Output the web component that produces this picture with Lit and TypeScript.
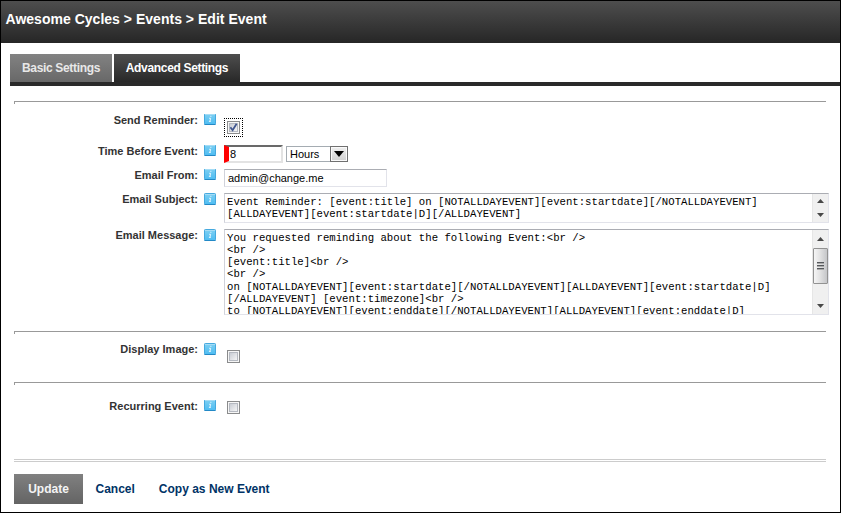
import { LitElement, html, css, svg } from "lit";
import { customElement, property } from "lit/decorators.js";
import { classMap } from "lit/directives/class-map.js";

@customElement("info-icon")
class InfoIcon extends LitElement {
  @property({ type: Boolean }) clipped = false;

  static styles = css`
    :host { display: block; height: 12px; overflow: hidden; }
    svg { display: block; }
    .up { margin-top: -1px; }
  `;

  render() {
    return html`<svg class=${classMap({ up: this.clipped })} width="12" height="12" viewBox="0 0 12 12">
      <defs><linearGradient id="g" x1="0" y1="0" x2="0" y2="1">
        <stop offset="0" stop-color="#7fd0f2" /><stop offset="1" stop-color="#4dbcf2" />
      </linearGradient></defs>
      <rect x=".5" y=".5" width="11" height="11" rx=".8" fill="url(#g)" stroke="#45a9de" />
      <path d="M1 1.5H11" stroke="#a5dcf5" />
      <path d="M.5 11.5H11.5" stroke="#2389c6" />
      <path d="M6.3 3.3H7.4M5.2 5.3H6.6L5.9 8.4H6.8M4.9 8.4H5.9" fill="none" stroke="#f2fbff" stroke-width=".95" />
    </svg>`;
  }
}

@customElement("check-box")
class CheckBox extends LitElement {
  @property({ type: Boolean }) checked = false;

  static styles = css`
    :host { display: block; width: 13px; height: 13px; }
    svg { display: block; }
  `;

  render() {
    return html`<svg width="13" height="13" viewBox="0 0 13 13">
      <defs><linearGradient id="c" x1="0" y1="0" x2="1" y2="1">
        <stop offset="0" stop-color="#c6cad2" /><stop offset="1" stop-color="#f8f8f8" />
      </linearGradient></defs>
      <rect x=".5" y=".5" width="12" height="12" fill="#f6f6f6" stroke="#8a8b8c" />
      <rect x="2.5" y="2.5" width="8" height="8" fill="url(#c)" stroke="#b5b9c1" />
      ${this.checked ? svg`<path d="M3.4 6.2L5.6 9.2L9.6 2.8" fill="none" stroke="#40568f" stroke-width="1.8" />` : ""}
    </svg>`;
  }
}

@customElement("scroll-strip")
class ScrollStrip extends LitElement {
  @property({ type: Boolean }) thumb = false;

  static styles = css`
    :host {
      display: flex; flex-direction: column; align-items: center; box-sizing: border-box;
      flex: none; width: 16px; background: #f0f0f0; border-left: 1px solid #e6e6e6; padding: 5px 0;
    }
    :host([thumb]) { padding: 7px 0 6px; }
    svg { display: block; flex: none; }
    .gap { flex: 1; }
    .thumb {
      box-sizing: border-box; width: 15px; height: 36px; margin-top: 7px; border: 1px solid #929292;
      border-radius: 1px; background: linear-gradient(90deg, #f5f5f5, #e2e2e3 45%, #c5c6c9);
      display: flex; flex-direction: column; align-items: center; justify-content: center; gap: 1px;
    }
    .grip { width: 7px; height: 2px; background: linear-gradient(#55585c 50%, #aaa 50%); }
  `;

  render() {
    return html`
      <svg width="7" height="4"><path d="M0 4L3.5 0L7 4Z" fill="#484848" /></svg>
      ${this.thumb ? html`<div class="thumb"><i class="grip"></i><i class="grip"></i><i class="grip"></i></div>` : ""}
      <div class="gap"></div>
      <svg width="7" height="4"><path d="M0 0L3.5 4L7 0Z" fill="#484848" /></svg>`;
  }
}

@customElement("app-root")
class AppRoot extends LitElement {
  static styles = css`
    :host {
      display: block; box-sizing: border-box; width: 841px; height: 513px; overflow: hidden;
      border: 1px solid #000; background: #fff; color: #333;
      font: 11px "Liberation Sans", Arial, sans-serif;
    }
    header {
      height: 42px; box-sizing: border-box; padding: 10px 0 0 4.5px; color: #fff;
      font-size: 14px; font-weight: bold; line-height: 17px; letter-spacing: .02px; white-space: nowrap;
      background: linear-gradient(#4e4e4e, #262626);
    }
    .tabs {
      display: flex; gap: 2px; margin: 11px 0 0 9px; border-bottom: 4px solid #2a2a2a;
      font-size: 12px; font-weight: bold; line-height: 28px; letter-spacing: -.33px;
    }
    .tab {
      height: 28px; box-sizing: border-box; text-align: center; white-space: nowrap;
      width: 102px; color: #e8e8e8; background: linear-gradient(#828282, #686868);
    }
    .tab.on { width: 126px; color: #fff; background: linear-gradient(#4e4e4e, #282828); }
    .section { margin: 15px 13px 0; width: 812px; }
    .rule { height: 3px; box-sizing: border-box; border-top: 1px solid #999; background: linear-gradient(#999, #999) 0 0 / 1px 100% no-repeat; }
    .first { padding-top: 9px; height: 227px; box-sizing: border-box; }
    .row { display: grid; grid-template-columns: 184px 12px 1fr; column-gap: 6px; width: 815px; align-items: start; }
    .row > .field { margin-left: 2px; }
    .label { text-align: right; font-weight: bold; line-height: 13px; white-space: nowrap; }
    .send { height: 32px; }
    .send .label, .send info-icon { margin-top: 1px; }
    .time, .from { height: 24px; }
    .subject { height: 36px; }
    .focus { display: flex; box-sizing: border-box; width: 19px; height: 19px; margin-top: 5px; padding: 2px; border: 1px dotted #000; }
    .inline { display: flex; gap: 3px; color: #000; }
    .amount {
      display: flex; box-sizing: border-box; width: 59px; height: 18px; line-height: 14px;
      border: solid; border-width: 2px 2px 2px 0; border-color: #696969 #e3e3e3 #e3e3e3;
    }
    .flag { display: block; width: 5px; height: 18px; margin: -2px 1px 0 0; background: #f00; clip-path: polygon(0 0, 100% 2px, 100% 16px, 0 100%); }
    .select { display: flex; justify-content: space-between; box-sizing: border-box; width: 62px; height: 16px; margin-top: 1px; border: 1px solid #a5acb2; padding-left: 3px; line-height: 14px; }
    .arrow {
      display: flex; align-items: center; justify-content: center; box-sizing: border-box;
      width: 18px; height: 16px; margin: -1px -1px 0 0; border: 1px solid #707070; box-shadow: inset 0 0 0 1px #fafafa;
      background: linear-gradient(#f0f0f0, #d0d0d0);
    }
    .box { box-sizing: border-box; border: 1px solid #e2e3ea; border-top-color: #abadb3; border-left-color: #d0d2da; color: #000; background: #fff; }
    .text { width: 163px; height: 18px; padding: 0 3px; line-height: 17px; }
    .area { display: flex; width: 605px; overflow: hidden; }
    .short { height: 30px; }
    .tall { height: 86px; }
    .area pre { flex: 1; margin: 2px 0 0 2px; font: 10.667px/12.15px "Liberation Mono", "Courier New", monospace; }
    .image { padding-top: 9px; height: 48px; box-sizing: border-box; }
    .recur { padding-top: 15px; height: 74px; box-sizing: border-box; }
    .image check-box, .recur check-box { margin-left: 3px; }
    .image check-box { margin-top: 7px; }
    .recur check-box { margin-top: 1px; }
    .double { height: 3px; box-sizing: border-box; border: solid #ccc; border-width: 1px 0; }
    .actions { display: flex; margin-top: 12px; font-size: 12px; font-weight: bold; line-height: 30px; color: #036; white-space: nowrap; }
    .update { width: 69px; height: 30px; text-align: center; color: #f4f4f4; background: linear-gradient(#808080, #646464); }
    .cancel { margin-left: 12.5px; }
    .copy { margin-left: 24px; }
  `;

  render() {
    return html`
      <header>Awesome Cycles &gt; Events &gt; Edit Event</header>
      <nav class="tabs"><div class="tab">Basic Settings</div><div class="tab on">Advanced Settings</div></nav>
      <div class="section">
        <div class="rule"></div>
        <div class="first">
          <div class="row send"><div class="label">Send Reminder:</div><info-icon clipped></info-icon>
            <div class="field focus"><check-box checked></check-box></div></div>
          <div class="row time"><div class="label">Time Before Event:</div><info-icon clipped></info-icon>
            <div class="field inline">
              <div class="amount"><i class="flag"></i>8</div>
              <div class="select">Hours<span class="arrow"><svg width="10" height="6"><path d="M0 0H10L5 6Z" fill="#000" /></svg></span></div>
            </div></div>
          <div class="row from"><div class="label">Email From:</div><info-icon clipped></info-icon>
            <div class="field box text">admin@change.me</div></div>
          <div class="row subject"><div class="label">Email Subject:</div><info-icon></info-icon>
            <div class="field box area short"><pre>${"Event Reminder: [event:title] on [NOTALLDAYEVENT][event:startdate][/NOTALLDAYEVENT]\n[ALLDAYEVENT][event:startdate|D][/ALLDAYEVENT]"}</pre><scroll-strip></scroll-strip></div></div>
          <div class="row"><div class="label">Email Message:</div><info-icon></info-icon>
            <div class="field box area tall"><pre>${"You requested reminding about the following Event:<br />\n<br />\n[event:title]<br />\n<br />\non [NOTALLDAYEVENT][event:startdate][/NOTALLDAYEVENT][ALLDAYEVENT][event:startdate|D]\n[/ALLDAYEVENT] [event:timezone]<br />\nto [NOTALLDAYEVENT][event:enddate][/NOTALLDAYEVENT][ALLDAYEVENT][event:enddate|D]"}</pre><scroll-strip thumb></scroll-strip></div></div>
        </div>
        <div class="rule"></div>
        <div class="image"><div class="row"><div class="label">Display Image:</div><info-icon></info-icon>
          <div class="field"><check-box></check-box></div></div></div>
        <div class="rule"></div>
        <div class="recur"><div class="row"><div class="label">Recurring Event:</div><info-icon clipped></info-icon>
          <div class="field"><check-box></check-box></div></div></div>
        <div class="double"></div>
        <div class="actions"><div class="update">Update</div><div class="cancel">Cancel</div><div class="copy">Copy as New Event</div></div>
      </div>`;
  }
}
